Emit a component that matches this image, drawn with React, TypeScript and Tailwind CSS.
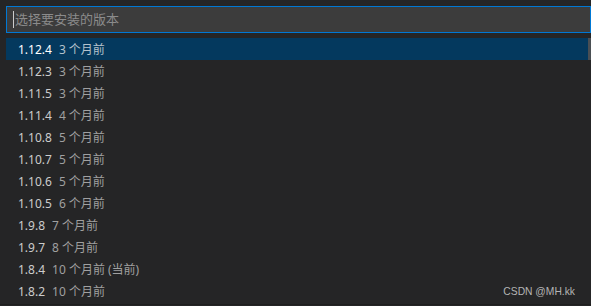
import React from "react";

const versions: { v: string; d: string }[] = [
  { v: "1.12.4", d: "3 个月前" },
  { v: "1.12.3", d: "3 个月前" },
  { v: "1.11.5", d: "3 个月前" },
  { v: "1.11.4", d: "4 个月前" },
  { v: "1.10.8", d: "5 个月前" },
  { v: "1.10.7", d: "5 个月前" },
  { v: "1.10.6", d: "5 个月前" },
  { v: "1.10.5", d: "6 个月前" },
  { v: "1.9.8", d: "7 个月前" },
  { v: "1.9.7", d: "8 个月前" },
  { v: "1.8.4", d: "10 个月前 (当前)" },
  { v: "1.8.2", d: "10 个月前" },
];

const App: React.FC = () => {
  return (
    <div
      className="relative h-[306px] w-[591px] overflow-hidden bg-[#252526]"
      style={{ fontFamily: '"Noto Sans", "Noto Sans CJK SC", sans-serif' }}
    >
      <div className="pl-[6px] pt-[6px]">
        <div className="flex h-[27px] items-center border border-[#0078d4] bg-[#3c3c3c] pl-[6px]">
          <span className="h-[17px] w-px bg-[#cccccc]" />
          <span className="ml-px text-[13px] leading-none text-[#8b8b8b]">
            选择要安装的版本
          </span>
        </div>
      </div>

      <div className="mt-[5px] flex h-[267px] border-b border-[#1e1e1e] pl-[6px]">
        <ul className="flex-1">
          {versions.map((item, i) => (
            <li
              key={item.v}
              className={
                "flex h-[22px] items-center pl-[12px] pt-[2px] text-[12px] leading-none " +
                (i === 0 ? "bg-[#04395e]" : "")
              }
            >
              <span className={i === 0 ? "text-white" : "text-[#cccccc]"}>
                {item.v}
              </span>
              <span
                className={
                  "ml-[7px] " + (i === 0 ? "text-[#b5c2cc]" : "text-[#a0a0a0]")
                }
              >
                {item.d}
              </span>
            </li>
          ))}
        </ul>
        <div className="w-[3px]">
          <div className="h-[22px] bg-[#4a4f54]" />
        </div>
      </div>

      <span
        className="absolute right-[16px] top-[287px] text-[10.3px] leading-none text-[#b4b4b4]"
        style={{ fontFamily: '"Liberation Sans", Arial, sans-serif' }}
      >
        CSDN @MH.kk
      </span>
    </div>
  );
};

export default App;
